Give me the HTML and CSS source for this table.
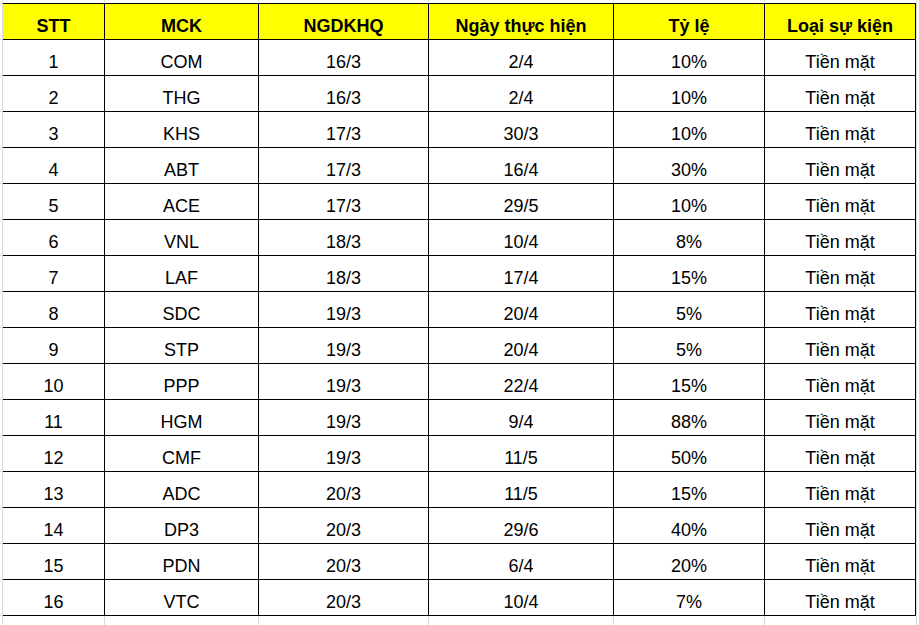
FILE: index.html
```html
<!DOCTYPE html>
<html lang="vi">
<head>
<meta charset="utf-8">
<title>Lịch sự kiện</title>
<link rel="stylesheet" href="styles.css">
</head>
<body>
<table class="sheet">
  <colgroup>
    <col class="c1"><col class="c2"><col class="c3"><col class="c4"><col class="c5"><col class="c6">
  </colgroup>
  <thead>
    <tr><th>STT</th><th>MCK</th><th>NGDKHQ</th><th>Ngày thực hiện</th><th>Tỷ lệ</th><th>Loại sự kiện</th></tr>
  </thead>
  <tbody>
    <tr><td>1</td><td>COM</td><td>16/3</td><td>2/4</td><td>10%</td><td>Tiền mặt</td></tr>
    <tr><td>2</td><td>THG</td><td>16/3</td><td>2/4</td><td>10%</td><td>Tiền mặt</td></tr>
    <tr><td>3</td><td>KHS</td><td>17/3</td><td>30/3</td><td>10%</td><td>Tiền mặt</td></tr>
    <tr><td>4</td><td>ABT</td><td>17/3</td><td>16/4</td><td>30%</td><td>Tiền mặt</td></tr>
    <tr><td>5</td><td>ACE</td><td>17/3</td><td>29/5</td><td>10%</td><td>Tiền mặt</td></tr>
    <tr><td>6</td><td>VNL</td><td>18/3</td><td>10/4</td><td>8%</td><td>Tiền mặt</td></tr>
    <tr><td>7</td><td>LAF</td><td>18/3</td><td>17/4</td><td>15%</td><td>Tiền mặt</td></tr>
    <tr><td>8</td><td>SDC</td><td>19/3</td><td>20/4</td><td>5%</td><td>Tiền mặt</td></tr>
    <tr><td>9</td><td>STP</td><td>19/3</td><td>20/4</td><td>5%</td><td>Tiền mặt</td></tr>
    <tr><td>10</td><td>PPP</td><td>19/3</td><td>22/4</td><td>15%</td><td>Tiền mặt</td></tr>
    <tr><td>11</td><td>HGM</td><td>19/3</td><td>9/4</td><td>88%</td><td>Tiền mặt</td></tr>
    <tr><td>12</td><td>CMF</td><td>19/3</td><td>11/5</td><td>50%</td><td>Tiền mặt</td></tr>
    <tr><td>13</td><td>ADC</td><td>20/3</td><td>11/5</td><td>15%</td><td>Tiền mặt</td></tr>
    <tr><td>14</td><td>DP3</td><td>20/3</td><td>29/6</td><td>40%</td><td>Tiền mặt</td></tr>
    <tr><td>15</td><td>PDN</td><td>20/3</td><td>6/4</td><td>20%</td><td>Tiền mặt</td></tr>
    <tr><td>16</td><td>VTC</td><td>20/3</td><td>10/4</td><td>7%</td><td>Tiền mặt</td></tr>
  </tbody>
</table>
</body>
</html>
```

FILE: styles.css
```css
html, body {
  margin: 0;
  padding: 0;
}

body {
  padding: 3px 0 0 3px;
  height: 625px;
  box-sizing: border-box;
  overflow: hidden;
  font-family: "Liberation Sans", Arial, sans-serif;
  color: #000;
  background-color: #fff;
  background-image:
    linear-gradient(#d9d9d9, #d9d9d9),
    linear-gradient(#d9d9d9, #d9d9d9),
    linear-gradient(#d9d9d9, #d9d9d9),
    linear-gradient(#d9d9d9, #d9d9d9),
    linear-gradient(#d9d9d9, #d9d9d9),
    linear-gradient(#d9d9d9, #d9d9d9),
    linear-gradient(#d9d9d9, #d9d9d9),
    linear-gradient(#d9d9d9 0 1px, transparent 1px);
  background-size:
    1px 100%, 1px 100%, 1px 100%, 1px 100%, 1px 100%, 1px 100%, 1px 100%,
    3px 36px;
  background-position:
    2px 0, 104px 0, 258px 0, 428px 0, 613px 0, 764px 0, 916px 0,
    0 3px;
  background-repeat:
    no-repeat, no-repeat, no-repeat, no-repeat, no-repeat, no-repeat, no-repeat,
    repeat-y;
}

.sheet {
  border-collapse: separate;
  border-spacing: 0;
  table-layout: fixed;
  width: 913px;
  background: #fff;
  font-size: 18px;
  line-height: 20px;
}

.c1 { width: 102px; }
.c2 { width: 154px; }
.c3 { width: 170px; }
.c4 { width: 185px; }
.c5 { width: 151px; }
.c6 { width: 151px; }

.sheet th,
.sheet td {
  box-sizing: border-box;
  padding: 0 0 3px 0;
  text-align: center;
  vertical-align: bottom;
  border-right: 1px solid #000;
  border-bottom: 1px solid #000;
  white-space: nowrap;
}

.sheet th {
  height: 37px;
  border-top: 1px solid #000;
  background: #ffff00;
  font-weight: bold;
}

.sheet td {
  height: 36px;
  font-weight: normal;
}
```
